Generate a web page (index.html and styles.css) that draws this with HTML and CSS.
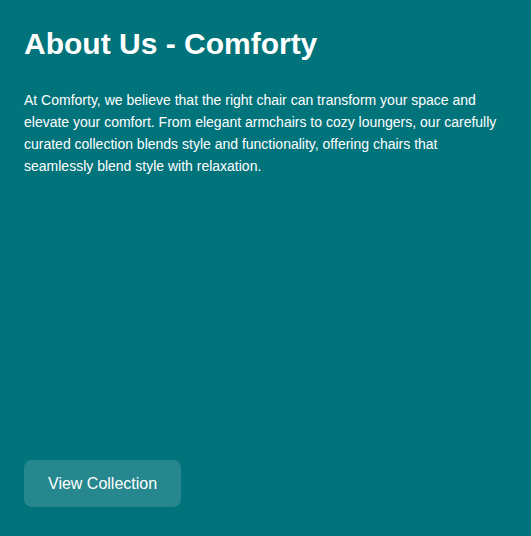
FILE: index.html
```html
<!DOCTYPE html>
<html lang="en">
<head>
<meta charset="utf-8">
<title>About Us - Comforty</title>
<link rel="stylesheet" href="styles.css">
</head>
<body>
<section class="about">
  <div class="about-text">
    <h1 class="about-title">About Us - Comforty</h1>
    <p class="about-desc">At Comforty, we believe that the right chair can transform your space and elevate your comfort. From elegant armchairs to cozy loungers, our carefully curated collection blends style and functionality, offering chairs that seamlessly blend style with relaxation.</p>
  </div>
  <div class="about-actions">
    <a class="btn" href="#">View Collection</a>
  </div>
</section>
</body>
</html>
```

FILE: styles.css
```css
html, body {
  margin: 0;
  padding: 0;
  height: 100%;
}
body {
  background: #01737b;
  font-family: "Liberation Sans", Arial, sans-serif;
  color: #ffffff;
}
.about {
  box-sizing: border-box;
  height: 536px;
  padding: 24px 24px 29px 24px;
  display: flex;
  flex-direction: column;
  justify-content: space-between;
}
.about-title {
  margin: 0 0 25px 0;
  font-size: 30px;
  font-weight: 700;
  line-height: 40px;
}
.about-desc {
  margin: 0;
  font-size: 14px;
  line-height: 22px;
}
.about-actions {
  display: flex;
}
.btn {
  display: inline-block;
  background: rgba(255, 255, 255, 0.15);
  color: #ffffff;
  text-decoration: none;
  font-size: 16px;
  line-height: 19px;
  padding: 14px 24px;
  border-radius: 8px;
}
```
